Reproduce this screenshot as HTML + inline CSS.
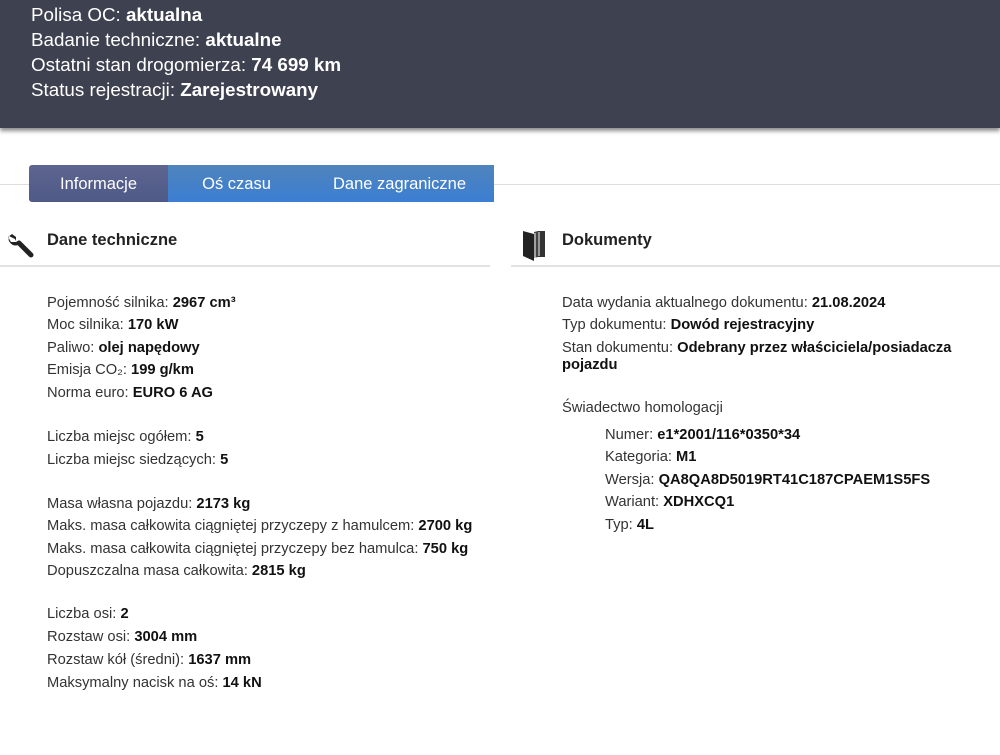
<!DOCTYPE html>
<html><head><meta charset="utf-8"><style>
body{margin:0;width:1000px;height:755px;overflow:hidden;background:#fff;font-family:"Liberation Sans",Arial,sans-serif;position:relative}
.hdr{position:absolute;left:0;top:0;width:1000px;height:128px;background:#3e414f;box-shadow:0 3px 4px rgba(0,0,0,.45)}
.hdr div{position:absolute;left:31px;color:#fff;font-size:18.8px;line-height:20px}
.hline{position:absolute;left:0;width:1000px;top:184px;height:1px;background:#ddd}
.tabs{position:absolute;left:29px;top:165px;height:37px;display:flex;font-size:16.5px;color:#fff}
.tabs div{height:37px;line-height:38px;text-align:center}
.t1{width:139px;background:linear-gradient(#5d6590,#4f5a86);border-radius:3px 0 0 3px}
.t2{width:137px;background:linear-gradient(#4f84bc,#3c7ed3)}
.t3{width:189px;background:linear-gradient(#4f84bc,#3c7ed3)}
.sec{position:absolute;font-size:16.5px;font-weight:bold;color:#222}
.rule{position:absolute;top:265px;height:2px;background:#e2e2e2}
.t{position:absolute;font-size:14.7px;color:#333;line-height:17px}
.t b{color:#111}
</style></head><body>
<div class="hdr">
<div style="top:5px">Polisa OC: <b>aktualna</b></div>
<div style="top:30px">Badanie techniczne: <b>aktualne</b></div>
<div style="top:55px">Ostatni stan drogomierza: <b>74 699 km</b></div>
<div style="top:80px">Status rejestracji: <b>Zarejestrowany</b></div>
</div>
<div class="hline"></div>
<div class="tabs"><div class="t1">Informacje</div><div class="t2">Oś czasu</div><div class="t3">Dane zagraniczne</div></div>
<svg style="position:absolute;left:5px;top:231px" width="30" height="30" viewBox="0 0 30 30"><path d="M14 12 L26 24" stroke="#222" stroke-width="5" stroke-linecap="round"/><path d="M3 6 L7 3 L11 6 L11 11 L6 11 Z M4 5 A7 7 0 0 0 13 14 L10 8 Z" fill="#222"/></svg>
<div class="sec" style="left:47px;top:231px">Dane techniczne</div>
<div class="rule" style="left:0;width:490px"></div>
<svg style="position:absolute;left:522px;top:228px" width="26" height="34" viewBox="0 0 26 34"><path d="M1 3 L12 6 L12 33 L1 28 Z" fill="#222"/><path d="M12 6 L12 4 L16 3 L16 29 L12 30" fill="#444"/><path d="M16 3 L23 3 L23 29 L16 29 Z" fill="#333"/><path d="M13 5 L13 30 M17 4 L17 28" stroke="#fff" stroke-width="1"/></svg>
<div class="sec" style="left:562px;top:231px">Dokumenty</div>
<div class="rule" style="left:511px;width:489px"></div>
<div class="t" style="left:47px;top:295px">Pojemność silnika: <b>2967 cm³</b></div>
<div class="t" style="left:47px;top:317px">Moc silnika: <b>170 kW</b></div>
<div class="t" style="left:47px;top:340px">Paliwo: <b>olej napędowy</b></div>
<div class="t" style="left:47px;top:362px">Emisja CO₂: <b>199 g/km</b></div>
<div class="t" style="left:47px;top:385px">Norma euro: <b>EURO 6 AG</b></div>
<div class="t" style="left:47px;top:429px">Liczba miejsc ogółem: <b>5</b></div>
<div class="t" style="left:47px;top:452px">Liczba miejsc siedzących: <b>5</b></div>
<div class="t" style="left:47px;top:496px">Masa własna pojazdu: <b>2173 kg</b></div>
<div class="t" style="left:47px;top:518px">Maks. masa całkowita ciągniętej przyczepy z hamulcem: <b>2700 kg</b></div>
<div class="t" style="left:47px;top:541px">Maks. masa całkowita ciągniętej przyczepy bez hamulca: <b>750 kg</b></div>
<div class="t" style="left:47px;top:563px">Dopuszczalna masa całkowita: <b>2815 kg</b></div>
<div class="t" style="left:47px;top:606px">Liczba osi: <b>2</b></div>
<div class="t" style="left:47px;top:629px">Rozstaw osi: <b>3004 mm</b></div>
<div class="t" style="left:47px;top:652px">Rozstaw kół (średni): <b>1637 mm</b></div>
<div class="t" style="left:47px;top:675px">Maksymalny nacisk na oś: <b>14 kN</b></div>
<div class="t" style="left:562px;top:295px">Data wydania aktualnego dokumentu: <b>21.08.2024</b></div>
<div class="t" style="left:562px;top:317px">Typ dokumentu: <b>Dowód rejestracyjny</b></div>
<div class="t" style="left:562px;top:340px;width:420px">Stan dokumentu: <b>Odebrany przez właściciela/posiadacza pojazdu</b></div>
<div class="t" style="left:562px;top:400px">Świadectwo homologacji</div>
<div class="t" style="left:605px;top:427px">Numer: <b>e1*2001/116*0350*34</b></div>
<div class="t" style="left:605px;top:449px">Kategoria: <b>M1</b></div>
<div class="t" style="left:605px;top:472px">Wersja: <b>QA8QA8D5019RT41C187CPAEM1S5FS</b></div>
<div class="t" style="left:605px;top:494px">Wariant: <b>XDHXCQ1</b></div>
<div class="t" style="left:605px;top:517px">Typ: <b>4L</b></div>
</body></html>
